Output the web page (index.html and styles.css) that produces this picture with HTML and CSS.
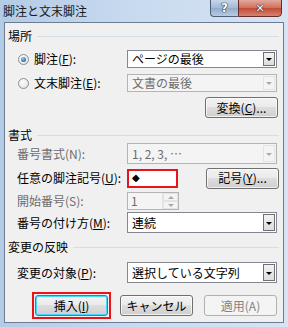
FILE: index.html
```html
<!DOCTYPE html>
<html lang="ja">
<head>
    <meta charset="UTF-8">
    <title>脚注と文末脚注</title>
    <link rel="stylesheet" href="styles.css">
</head>
<body>
    <div class="window">
        <div class="titlebar">
            <span class="title">脚注と文末脚注</span>
            <div class="caption">
                <span class="cap-help">?</span>
                <span class="cap-close">✕</span>
            </div>
        </div>
        <div class="content">
            <div class="group h1"><span>場所</span></div>

            <div class="row r1">
                <div class="label radio-label"><span class="radio checked"></span>脚注(<u>F</u>):</div>
                <div class="select small">ページの最後<span class="drop"></span></div>
            </div>
            <div class="row r2">
                <div class="label radio-label"><span class="radio"></span>文末脚注(<u>E</u>):</div>
                <div class="select small disabled">文書の最後<span class="drop"></span></div>
            </div>
            <div class="row r3">
                <button class="button">変換(<u>C</u>)...</button>
            </div>

            <div class="group h2"><span>書式</span></div>

            <div class="row r4">
                <div class="label dim">番号書式(N):</div>
                <div class="select disabled">1, 2, 3, …<span class="drop"></span></div>
            </div>
            <div class="row r5">
                <div class="label">任意の脚注記号(<u>U</u>):</div>
                <div class="mark">◆</div>
                <button class="button">記号(<u>Y</u>)...</button>
            </div>
            <div class="row r6">
                <div class="label dim">開始番号(S):</div>
                <div class="spin">
                    <span class="spin-value">1</span>
                    <span class="spin-btns"><span class="up"></span><span class="down"></span></span>
                </div>
            </div>
            <div class="row r7">
                <div class="label">番号の付け方(<u>M</u>):</div>
                <div class="select">連続<span class="drop"></span></div>
            </div>

            <div class="group h3"><span>変更の反映</span></div>

            <div class="row r8">
                <div class="label">変更の対象(<u>P</u>):</div>
                <div class="select">選択している文字列<span class="drop"></span></div>
            </div>

            <div class="row actions">
                <div class="focus-ring"><button class="button default">挿入(<u>I</u>)</button></div>
                <button class="button">キャンセル</button>
                <button class="button disabled">適用(A)</button>
            </div>
        </div>
    </div>
</body>
</html>
```

FILE: styles.css
```css
body {
    margin: 0;
    font-family: "Noto Sans CJK JP", "Liberation Sans", sans-serif;
    font-size: 12px;
    color: #000;
}

.window {
    width: 288px;
    height: 327px;
    box-sizing: border-box;
    padding: 0 4px 4px 4px;
    background: linear-gradient(90deg, #b4cbe6 0%, #c9dbef 50%, #d6e4f3 100%);
}

.titlebar {
    height: 22px;
    display: flex;
    justify-content: space-between;
    align-items: flex-start;
}

.title {
    margin: 4px 0 0 -1px;
    font-size: 12px;
    line-height: 14px;
    color: #1b1b1b;
}

.caption {
    display: flex;
    margin-right: 2px;
}

.cap-help,
.cap-close {
    height: 16px;
    margin-top: -1px;
    display: flex;
    justify-content: center;
    align-items: center;
    font-family: "DejaVu Sans", sans-serif;
    font-weight: bold;
    color: #fff;
    border: 1px solid #4d5e78;
    text-shadow: 0 0 1px #223, 0 0 1px #223, 0 0 1px #223;
}

.cap-help {
    width: 27px;
    font-size: 12px;
    background: linear-gradient(#c6d6ea, #a3b9d5 50%, #93abc9 51%, #b8cbe2);
    border-right: none;
    border-radius: 0 0 0 4px;
}

.cap-close {
    width: 42px;
    font-size: 11px;
    background: linear-gradient(#e3a89c, #cf6e5c 50%, #c14a36 51%, #d6826f);
    border-color: #6a2c26;
    border-radius: 0 0 4px 0;
}

.content {
    height: 301px;
    box-sizing: border-box;
    background-color: #f0f0f0;
    border: 1px solid #6c7c94;
    display: flex;
    flex-direction: column;
}

.group {
    height: 16px;
    display: flex;
    align-items: center;
    padding: 0 4px 0 3px;
    line-height: 14px;
}

.group::after {
    content: "";
    flex: 1;
    height: 1px;
    margin-left: 5px;
    background-color: #d3dde6;
}

.h1 { margin-top: 5px; }
.h2 { margin-top: 9px; }
.h3 { margin-top: 6px; }

.row {
    display: flex;
    align-items: center;
    padding-left: 12px;
    line-height: 14px;
}

.r1 { margin-top: 6px; height: 18px; padding-left: 13px; }
.r2 { margin-top: 6px; height: 18px; padding-left: 13px; }
.r3 { margin-top: 5px; height: 21px; justify-content: flex-end; padding-right: 5px; }
.r4 { margin-top: 0; height: 21px; }
.r5 { margin-top: 4px; height: 20px; }
.r6 { margin-top: 4px; height: 18px; }
.r7 { margin-top: 2px; height: 21px; }
.r8 { margin-top: 7px; height: 21px; }

.label {
    width: 110px;
    flex-shrink: 0;
    white-space: nowrap;
}

.radio-label {
    width: 109px;
    display: flex;
    align-items: center;
}

.dim { color: #6d6d6d; }

u { text-decoration: underline; text-underline-offset: 1px; }

.radio {
    width: 11px;
    height: 11px;
    box-sizing: border-box;
    border-radius: 50%;
    border: 1px solid #8e8f8f;
    background: radial-gradient(circle at 40% 35%, #ffffff, #dcdcdc);
    margin: 0 5px 0 0;
    position: relative;
}

.radio.checked::after {
    content: "";
    position: absolute;
    left: 2px;
    top: 2px;
    width: 5px;
    height: 5px;
    border-radius: 50%;
    background: radial-gradient(circle at 40% 35%, #8fd0f5, #1f6fb5 70%, #0c4a8a);
}

.select {
    width: 150px;
    height: 100%;
    box-sizing: border-box;
    border: 1px solid #828790;
    background-color: #fff;
    display: flex;
    align-items: center;
    padding-left: 4px;
    position: relative;
    font-size: 12px;
}

.select.disabled {
    background-color: #f4f4f4;
    border-color: #b4b4b4;
    color: #6d6d6d;
}

.drop {
    position: absolute;
    right: 1px;
    top: 1px;
    bottom: 1px;
    width: 12px;
    box-sizing: border-box;
    border: 1px solid #707070;
    background: linear-gradient(#f2f2f2, #dcdcdc);
}

.drop::after {
    content: "";
    position: absolute;
    left: 2px;
    top: 50%;
    margin-top: -1px;
    border-left: 3px solid transparent;
    border-right: 3px solid transparent;
    border-top: 3px solid #000;
}

.disabled .drop {
    border-color: #e3e3e3;
    background: #f4f4f4;
}

.disabled .drop::after {
    border-top-color: #a9a9a9;
}

.mark {
    width: 51px;
    height: 19px;
    box-sizing: border-box;
    border: 2px solid #e8141c;
    background-color: #fff;
    font-family: "DejaVu Sans", sans-serif;
    font-size: 10px;
    padding-left: 3px;
    display: flex;
    align-items: center;
    margin-right: 28px;
}

.button {
    width: 73px;
    height: 21px;
    box-sizing: border-box;
    padding: 0;
    font-family: "Noto Sans CJK JP", "Liberation Sans", sans-serif;
    font-size: 12px;
    line-height: 14px;
    color: #000;
    border: 1px solid #707070;
    border-radius: 3px;
    background: linear-gradient(#f2f2f2 0%, #ebebeb 45%, #dddddd 50%, #cfcfcf 100%);
    box-shadow: inset 0 0 0 1px rgba(255, 255, 255, 0.7);
}

.button.default {
    border-color: #3c7fb1;
    box-shadow: inset 0 0 0 1px #48d8fb;
}

.button.disabled {
    color: #838383;
    border-color: #adb2b5;
    background: #f4f4f4;
    box-shadow: none;
}

.spin {
    width: 52px;
    height: 18px;
    box-sizing: border-box;
    border: 1px solid #b4b4b4;
    background-color: #f4f4f4;
    display: flex;
}

.spin-value {
    flex: 1;
    color: #6d6d6d;
    padding-left: 3px;
    display: flex;
    align-items: center;
}

.spin-btns {
    width: 15px;
    display: flex;
    flex-direction: column;
    border-left: 1px solid #e3e3e3;
}

.spin-btns span {
    flex: 1;
    position: relative;
    border: 1px solid #e3e3e3;
}

.spin-btns span::after {
    content: "";
    position: absolute;
    left: 4px;
    top: 2px;
    border-left: 3px solid transparent;
    border-right: 3px solid transparent;
}

.spin-btns .up::after { border-bottom: 3px solid #a9a9a9; }
.spin-btns .down::after { border-top: 3px solid #a9a9a9; }

.actions {
    margin-top: 9px;
    height: 27px;
    padding-left: 27px;
    gap: 9px;
}

.focus-ring {
    border: 2px solid #e8141c;
    padding: 1px;
    display: flex;
    margin-right: 0;
}

.actions .button + .button {
    margin-left: 2px;
}
```
